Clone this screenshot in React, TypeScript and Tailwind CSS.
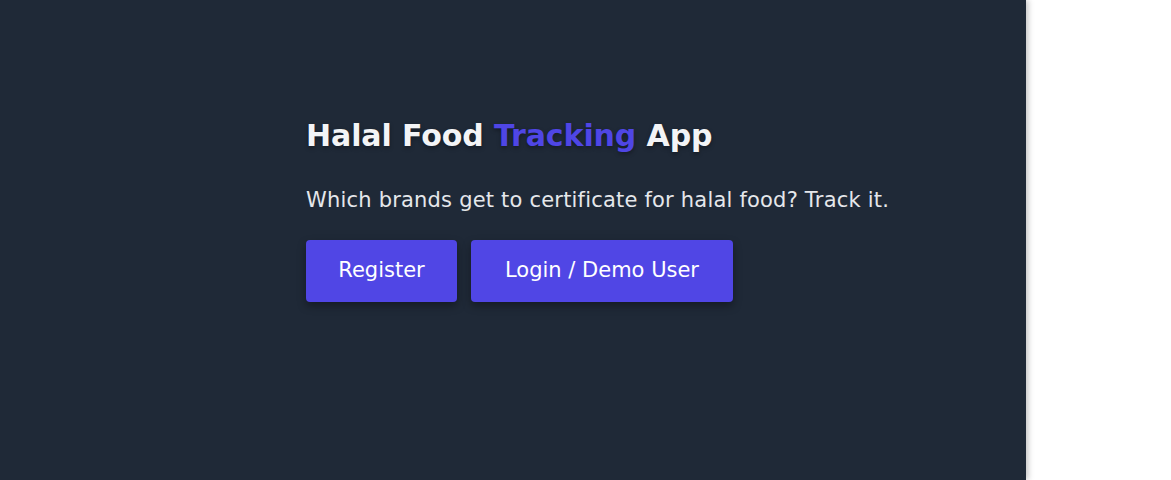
export default function App() {
  return (
    <div className="flex h-[480px] w-[1171px] bg-white" style={{ fontFamily: '"DejaVu Sans", sans-serif' }}>
      <div className="h-full w-[1026px] bg-[#1f2937] pl-[306px] pt-[118px] shadow-[2px_0_6px_rgba(0,0,0,0.25)]">
        <h1 className="text-[30px] leading-[36px] font-bold tracking-[-0.1px] text-[#f3f4f6] [text-shadow:0_2px_4px_rgba(0,0,0,0.35)]">
          Halal Food <span className="text-[#4f46e5]">Tracking</span> App
        </h1>
        <p className="mt-[32px] text-[21px] leading-[28px] tracking-[0.2px] text-[#e5e7eb]">
          Which brands get to certificate for halal food? Track it.
        </p>
        <div className="mt-[26px] flex gap-[14px]">
          <button className="h-[62px] w-[151px] rounded bg-[#5046e5] text-[21px] font-medium text-white shadow-[0_4px_8px_rgba(0,0,0,0.35)]">
            Register
          </button>
          <button className="h-[62px] w-[262px] rounded bg-[#5046e5] text-[21px] font-medium text-white shadow-[0_4px_8px_rgba(0,0,0,0.35)]">
            Login / Demo User
          </button>
        </div>
      </div>
    </div>
  );
}
